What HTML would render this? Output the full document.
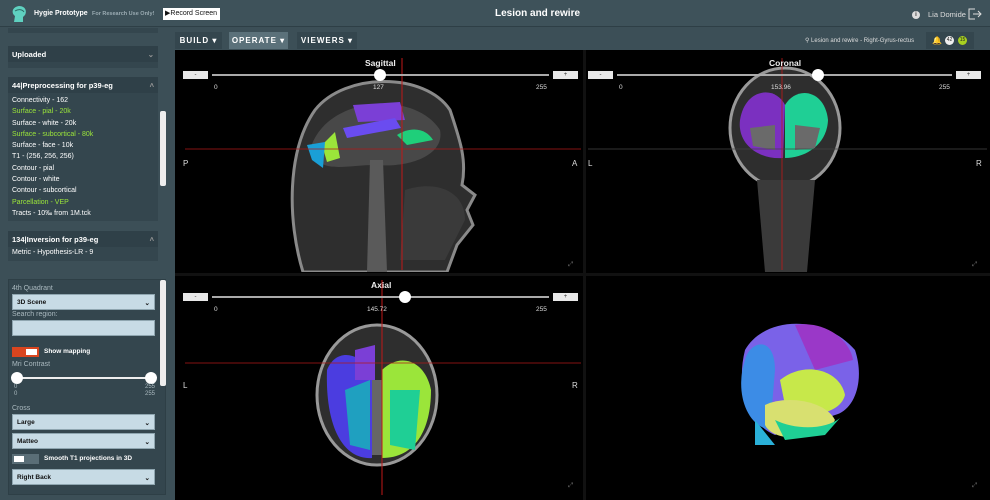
<!DOCTYPE html><html><head><style>
*{box-sizing:border-box;margin:0;padding:0}
body{width:990px;height:500px;overflow:hidden;background:#3c4f57;font-family:"Liberation Sans",sans-serif;color:#fff;position:relative}
.a{position:absolute}
.hdr{left:0;top:0;width:990px;height:27px;background:#3e525a;border-bottom:1px solid #2e3f46}
.side{left:0;top:28px;width:170px;height:472px;background:#3c4f57}
.ph{background:#2f4048;height:15px;font-size:7.5px;font-weight:bold;padding:4px 4px;}
.item{font-size:7px;line-height:11.3px;padding-left:4px}
.g{color:#9be53a}
.sel{background:#c7dbe5;color:#111;font-size:6.5px;font-weight:bold;height:16px;padding:4px 4px;position:absolute;left:12px;width:143px;border:1px solid #8fa6b0}
.lbl{font-size:7px;color:#aab9bf;position:absolute;left:12px}
.blk{background:#000}
.sl{position:absolute;height:2px;background:#aaa}
.btn{position:absolute;width:25px;height:8px;background:#e8e8e8;color:#333;font-size:6px;text-align:center;line-height:8px}
.knob{position:absolute;width:12px;height:12px;border-radius:50%;background:#fff}
.t{position:absolute;font-size:6.5px;color:#ddd}
.tt{position:absolute;font-size:8.5px;font-weight:bold;color:#eee}
</style></head><body>
<div class="a hdr">
 <svg class="a" style="left:10px;top:5px" width="18" height="19"><path d="M4 17 L5 11 C1 8 2 2 9 1 C16 1 17 7 15 10 L13 12 L13 17 Z" fill="#5fd1c0"/><path d="M5 6 C8 4 12 4 14 7" stroke="#2d6c66" fill="none"/></svg>
 <div class="a" style="left:34px;top:10px;font-size:7px;font-weight:bold">Hygie Prototype</div>
 <div class="a" style="left:92px;top:11px;font-size:5.5px;color:#9aabb2;font-weight:bold">For Research Use Only!</div>
 <div class="a" style="left:163px;top:8px;width:57px;height:12px;background:#fff;color:#111;font-size:7px;line-height:12px;padding-left:2px">▶Record Screen</div>
 <div class="a" style="left:495px;top:8px;font-size:10px;font-weight:bold">Lesion and rewire</div>
 <div class="a" style="left:912px;top:11px;width:8px;height:8px;border-radius:50%;background:#ddd;color:#333;font-size:6px;text-align:center;line-height:8px;font-weight:bold">i</div>
 <div class="a" style="left:928px;top:10px;font-size:7.5px;color:#ddd">Lia Domide</div>
 <svg class="a" style="left:968px;top:8px" width="14" height="12"><path d="M7 1H1V11H7M5 6H13M10 3L13 6L10 9" stroke="#ddd" fill="none"/></svg>
</div>
<div class="a side">
 <div class="a" style="left:8px;top:0;width:150px;height:5px;background:#34464e"></div>
 <div class="a ph" style="left:8px;top:18px;width:150px;height:16px">Uploaded<span style="float:right;color:#999">⌄</span></div>
 <div class="a" style="left:8px;top:34px;width:150px;height:6px;background:#34464e"></div>
 <div class="a ph" style="left:8px;top:49px;width:150px;height:16px">44|Preprocessing for p39-eg<span style="float:right;color:#999">˄</span></div>
 <div class="a" style="left:8px;top:65px;width:150px;height:128px;background:#34464e;padding-top:2px">
  <div class="item">Connectivity - 162</div><div class="item g">Surface - pial - 20k</div><div class="item">Surface - white - 20k</div><div class="item g">Surface - subcortical - 80k</div><div class="item">Surface - face - 10k</div><div class="item">T1 - (256, 256, 256)</div><div class="item">Contour - pial</div><div class="item">Contour - white</div><div class="item">Contour - subcortical</div><div class="item g">Parcellation - VEP</div><div class="item">Tracts - 10‰ from 1M.tck</div>
 </div>
 <div class="a" style="left:160px;top:83px;width:6px;height:75px;background:#eee;border-radius:2px"></div>
 <div class="a ph" style="left:8px;top:203px;width:150px;height:16px">134|Inversion for p39-eg<span style="float:right;color:#999">˄</span></div>
 <div class="a" style="left:8px;top:219px;width:150px;height:14px;background:#34464e"><div class="item">Metric - Hypothesis-LR - 9</div></div>
</div>
<div class="a" style="left:8px;top:279px;width:158px;height:216px;background:#34464e;border:1px solid #2e3f46"></div>
<div class="a" style="left:160px;top:280px;width:6px;height:106px;background:#eee;border-radius:2px"></div>
<div class="lbl" style="top:285px">4th Quadrant</div>
<div class="sel" style="top:294px">3D Scene<span style="float:right">⌄</span></div>
<div class="lbl" style="top:311px">Search region:</div>
<div class="sel" style="top:320px"></div>
<div class="a" style="left:12px;top:347px;width:27px;height:10px;background:#d9451f"><div class="a" style="left:14px;top:2px;width:11px;height:6px;background:#fff"></div></div>
<div class="a" style="left:44px;top:348px;font-size:6.5px;font-weight:bold">Show mapping</div>
<div class="lbl" style="top:361px">Mri Contrast</div>
<div class="sl" style="left:17px;top:377px;width:134px;background:#eee"></div>
<div class="knob" style="left:11px;top:372px"></div><div class="knob" style="left:145px;top:372px"></div>
<div class="lbl" style="top:384px;left:14px;font-size:6px;line-height:7px">0<br>0</div>
<div class="lbl" style="top:384px;left:145px;font-size:6px;line-height:7px">255<br>255</div>
<div class="lbl" style="top:405px">Cross</div>
<div class="sel" style="top:414px">Large<span style="float:right">⌄</span></div>
<div class="sel" style="top:433px">Matteo<span style="float:right">⌄</span></div>
<div class="a" style="left:12px;top:454px;width:27px;height:10px;background:#5a6e77"><div class="a" style="left:2px;top:2px;width:10px;height:6px;background:#fff"></div></div>
<div class="a" style="left:44px;top:455px;font-size:6.5px;font-weight:bold">Smooth T1 projections in 3D</div>
<div class="sel" style="top:469px">Right Back<span style="float:right">⌄</span></div>

<div class="a" style="left:170px;top:28px;width:820px;height:22px;background:#3c4f57"></div>
<div class="a" style="left:175px;top:32px;width:47px;height:17px;background:#34464e;font-size:8px;font-weight:bold;letter-spacing:1px;line-height:17px;text-align:center">BUILD ▾</div>
<div class="a" style="left:229px;top:32px;width:59px;height:17px;background:#5b717a;font-size:8px;font-weight:bold;letter-spacing:1px;line-height:17px;text-align:center">OPERATE ▾</div>
<div class="a" style="left:297px;top:32px;width:60px;height:17px;background:#34464e;font-size:8px;font-weight:bold;letter-spacing:1px;line-height:17px;text-align:center">VIEWERS ▾</div>
<div class="a" style="left:805px;top:37px;font-size:6px;color:#ddd">⚲ Lesion and rewire - Right-Gyrus-rectus</div>
<div class="a" style="left:926px;top:32px;width:48px;height:17px;background:#34464e"></div>
<div class="a" style="left:932px;top:36px;font-size:8px">🔔</div>
<div class="a" style="left:945px;top:36px;width:9px;height:9px;border-radius:50%;background:#eee;color:#222;font-size:5px;text-align:center;line-height:9px">42</div>
<div class="a" style="left:958px;top:36px;width:9px;height:9px;border-radius:50%;background:#a8d020;color:#222;font-size:5px;text-align:center;line-height:9px">15</div>

<div class="a blk" style="left:175px;top:50px;width:815px;height:450px"></div>
<div class="a" style="left:583px;top:50px;width:3px;height:450px;background:#111"></div>
<div class="a" style="left:175px;top:273px;width:815px;height:3px;background:#111"></div>

<svg class="a" style="left:175px;top:50px" width="815" height="450">
 <defs><clipPath id="q1"><rect x="0" y="0" width="408" height="222"/></clipPath><clipPath id="q2"><rect x="411" y="0" width="404" height="222"/></clipPath></defs>
 <g clip-path="url(#q1)">
 <path d="M128 222 C112 170 112 100 140 60 C170 22 250 22 275 60 C285 90 292 110 287 135 L300 145 L292 160 L298 175 L282 195 L272 222Z" fill="#2e2e2e" stroke="#8a8a8a" stroke-width="3"/>
 <path d="M135 100 C150 45 240 40 265 80 C270 105 235 118 200 115 C170 115 145 125 135 100Z" fill="#484848"/>
 <path d="M178 55 L225 52 L230 70 L183 72Z" fill="#7b3fd6"/>
 <path d="M168 78 L220 68 L226 78 L172 88Z" fill="#6a4cf0"/>
 <path d="M222 85 C238 75 252 80 258 90 L232 95Z" fill="#1fcf7a"/>
 <path d="M147 95 L160 82 L165 108 L152 112Z" fill="#9be53a"/>
 <path d="M132 95 L150 92 L148 118 L137 110Z" fill="#1a9fd6"/>
 <path d="M195 110 L208 110 L212 222 L192 222Z" fill="#5a5a5a"/>
 <path d="M230 140 C260 130 290 140 290 170 L270 210 L225 210Z" fill="#3a3a3a"/>
 </g>
 <g clip-path="url(#q2)">
 <ellipse cx="610" cy="78" rx="55" ry="60" fill="#2e2e2e" stroke="#999" stroke-width="3"/>
 <path d="M565 70 C570 38 600 35 610 55 L608 108 C585 110 562 95 565 70Z" fill="#7b30c0"/>
 <path d="M610 55 C622 35 650 40 653 70 C652 95 630 108 610 108Z" fill="#1fcf95"/>
 <path d="M575 78 L600 75 L600 100 L578 96Z M620 75 L645 78 L640 98 L620 100Z" fill="#6a6a6a"/>
 <path d="M582 130 L640 130 L632 222 L590 222Z" fill="#3a3a3a"/>
 </g>
 <ellipse cx="202" cy="345" rx="60" ry="70" fill="#2e2e2e" stroke="#999" stroke-width="3"/>
 <path d="M152 320 C160 300 180 300 197 320 L197 408 C170 410 150 380 152 320Z" fill="#4b3de0"/>
 <path d="M207 320 C225 302 250 310 256 340 C256 380 240 408 207 408Z" fill="#9be53a"/>
 <path d="M170 340 L195 330 L195 400 L175 395Z" fill="#1fa0c0"/>
 <path d="M215 340 L245 340 L240 400 L215 395Z" fill="#1fcf95"/>
 <path d="M180 300 L200 295 L200 330 L180 330Z" fill="#7b3fd6"/>
 <path d="M197 330 L207 330 L207 405 L197 405Z" fill="#666"/>
 <path d="M570 300 C590 265 650 265 680 300 C690 330 680 360 660 365 L600 385 C575 375 560 340 570 300Z" fill="#7a62e8"/>
 <path d="M570 310 C575 290 600 285 600 320 L595 380 C570 375 560 340 570 310Z" fill="#3c8ce6"/>
 <path d="M620 275 C650 270 675 290 678 310 L640 320Z" fill="#9a38c8"/>
 <path d="M605 330 C630 310 665 320 670 345 C665 365 630 370 610 355Z" fill="#c7e84a"/>
 <path d="M590 355 C610 345 650 350 660 370 C650 390 600 395 590 375Z" fill="#d8e070"/>
 <path d="M600 370 C620 380 650 380 665 368 L650 385 L610 390Z" fill="#1fcf95"/>
 <path d="M580 370 L600 395 L580 395Z" fill="#2ab0d8"/>
 <line x1="10" y1="99" x2="406" y2="99" stroke="#b01818" stroke-width="0.8"/>
 <line x1="227" y1="8" x2="227" y2="220" stroke="#c01818" stroke-width="1"/>
 <line x1="413" y1="99" x2="812" y2="99" stroke="#444" stroke-width="0.8"/>
 <line x1="607" y1="8" x2="607" y2="220" stroke="#c01818" stroke-width="0.8"/>
 <line x1="10" y1="313" x2="406" y2="313" stroke="#b01818" stroke-width="0.8"/>
 <line x1="207" y1="230" x2="207" y2="445" stroke="#c01818" stroke-width="1"/>
</svg>

<div class="tt" style="left:365px;top:58px">Sagittal</div>
<div class="btn" style="left:183px;top:71px">-</div><div class="btn" style="left:553px;top:71px">+</div>
<div class="sl" style="left:212px;top:74px;width:337px"></div><div class="knob" style="left:374px;top:69px"></div>
<div class="t" style="left:214px;top:84px">0</div><div class="t" style="left:373px;top:84px">127</div><div class="t" style="left:536px;top:84px">255</div>
<div class="t" style="left:183px;top:159px;font-size:8px">P</div><div class="t" style="left:572px;top:159px;font-size:8px">A</div>
<div class="tt" style="left:769px;top:58px">Coronal</div>
<div class="btn" style="left:588px;top:71px">-</div><div class="btn" style="left:956px;top:71px">+</div>
<div class="sl" style="left:617px;top:74px;width:335px"></div><div class="knob" style="left:812px;top:69px"></div>
<div class="t" style="left:619px;top:84px">0</div><div class="t" style="left:771px;top:84px">153.96</div><div class="t" style="left:939px;top:84px">255</div>
<div class="t" style="left:588px;top:159px;font-size:8px">L</div><div class="t" style="left:976px;top:159px;font-size:8px">R</div>
<div class="tt" style="left:371px;top:280px">Axial</div>
<div class="btn" style="left:183px;top:293px">-</div><div class="btn" style="left:553px;top:293px">+</div>
<div class="sl" style="left:212px;top:296px;width:337px"></div><div class="knob" style="left:399px;top:291px"></div>
<div class="t" style="left:214px;top:306px">0</div><div class="t" style="left:367px;top:306px">145.72</div><div class="t" style="left:536px;top:306px">255</div>
<div class="t" style="left:183px;top:381px;font-size:8px">L</div><div class="t" style="left:572px;top:381px;font-size:8px">R</div>
<div class="t" style="left:568px;top:261px;color:#777">⤢</div><div class="t" style="left:972px;top:261px;color:#777">⤢</div>
<div class="t" style="left:568px;top:482px;color:#777">⤢</div><div class="t" style="left:972px;top:482px;color:#777">⤢</div>
</body></html>
